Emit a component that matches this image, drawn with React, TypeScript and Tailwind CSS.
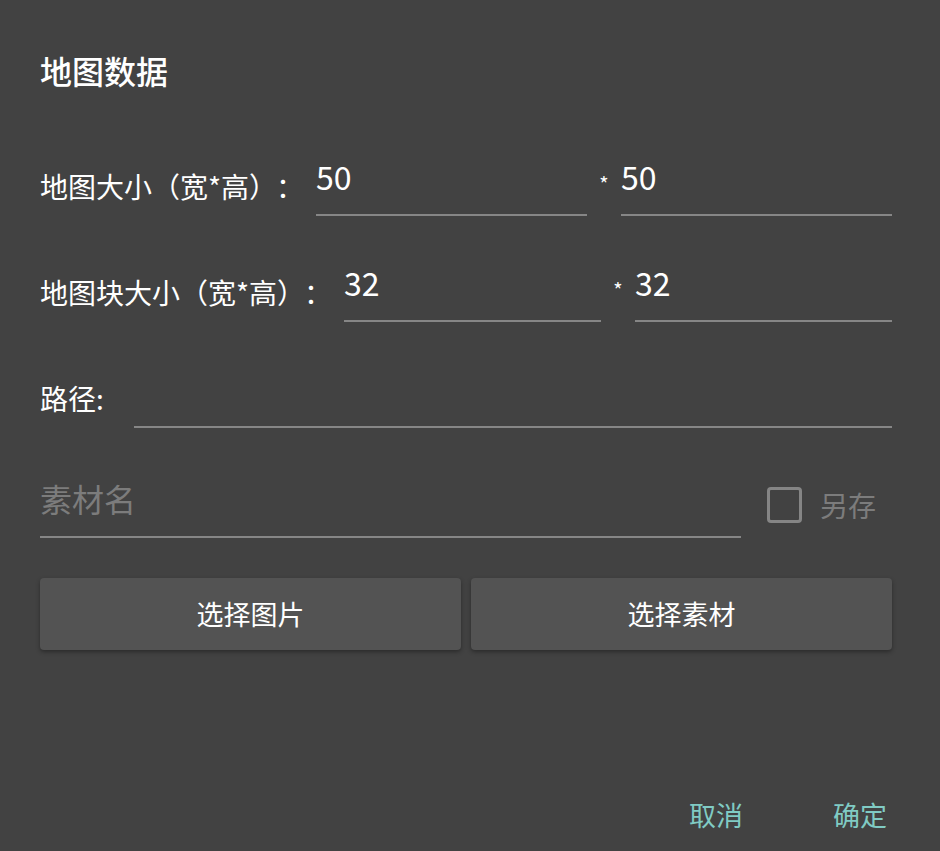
import React from 'react';

const font = { fontFamily: '"Noto Sans CJK SC", "Noto Sans", sans-serif' };

const Field: React.FC<{ value?: string; placeholder?: string }> = ({ value, placeholder }) => (
  <div className="flex-1 min-w-0 h-[56px] border-b-2 border-[#868686] pb-[21px]">
    <div className={`text-[32px] leading-[33px] ${value ? 'text-white' : 'text-[#7c7c7c]'}`}>
      {value ?? placeholder}
    </div>
  </div>
);

const SizeRow: React.FC<{ label: string; labelWidth: string; a: string; b: string }> = ({ label, labelWidth, a, b }) => (
  <div className="flex items-center">
    <div className={`${labelWidth} shrink-0 whitespace-nowrap text-[28px] text-white -mt-[4px]`}>
      {label}
      <span className="ml-[13px]">：</span>
    </div>
    <Field value={a} />
    <div className="w-[34px] shrink-0 text-center text-[20px] text-white -mt-[8px]">*</div>
    <Field value={b} />
  </div>
);

export default function App() {
  return (
    <div className="min-h-[851px] w-[940px] bg-[#424242] pl-10 pr-[48px] pt-[47px] flex flex-col" style={font}>
      <h2 className="text-[32px] leading-[46px] font-medium text-white">地图数据</h2>

      <div className="mt-[67px] flex flex-col gap-[50px]">
        <SizeRow label="地图大小（宽*高）" labelWidth="w-[276px]" a="50" b="50" />
        <SizeRow label="地图块大小（宽*高）" labelWidth="w-[304px]" a="32" b="32" />
        <div className="flex items-center">
          <div className="w-[94px] shrink-0 text-[28px] text-white -mt-[4px]">路径:</div>
          <Field value="" />
        </div>
      </div>

      <div className="mt-[54px] flex items-center">
        <Field placeholder="素材名" />
        <div className="ml-[26px] mr-[16px] flex items-center gap-[18px] -mt-[10px]">
          <div className="w-[35px] h-[36px] rounded-[4px] border-[3px] border-[#858585]" />
          <span className="text-[28px] text-[#7c7c7c]">另存</span>
        </div>
      </div>

      <div className="mt-[40px] flex gap-[10px]">
        {['选择图片', '选择素材'].map((t) => (
          <button
            key={t}
            className="flex-1 h-[72px] rounded-[4px] bg-[#535353] text-white text-[27px] shadow-[0_2px_4px_rgba(0,0,0,0.35)]"
          >
            {t}
          </button>
        ))}
      </div>

      <div className="mt-auto mb-[16px] flex justify-end gap-[90px] pr-[5px]">
        <span className="text-[27px] text-[#80cbc4]">取消</span>
        <span className="text-[27px] text-[#80cbc4]">确定</span>
      </div>
    </div>
  );
}
